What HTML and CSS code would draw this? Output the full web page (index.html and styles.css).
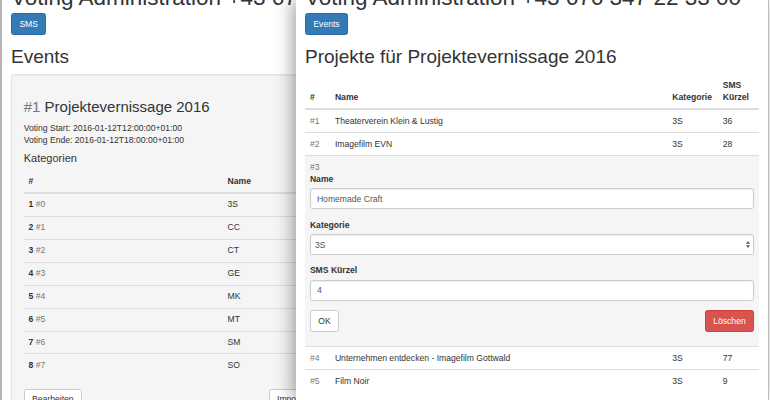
FILE: index.html
```html
<!DOCTYPE html>
<html lang="de">
<head>
<meta charset="utf-8">
<title>Voting Administration</title>
<link rel="stylesheet" href="styles.css">
</head>
<body>
<div class="stage">
  <div class="page page-back">
    <h1 class="title">Voting Administration +43 676 347 22 33 00</h1>
    <div class="toolbar"><button class="btn btn-primary">SMS</button></div>
    <h2>Events</h2>
    <div class="well">
      <h3><span class="muted">#1</span> Projektevernissage 2016</h3>
      <p class="dates">Voting Start: 2016-01-12T12:00:00+01:00<br>Voting Ende: 2016-01-12T18:00:00+01:00</p>
      <h4>Kategorien</h4>
      <table class="table cats">
        <thead>
          <tr><th class="c-id">#</th><th class="c-name">Name</th><th></th></tr>
        </thead>
        <tbody>
          <tr><td><b>1</b> <span class="muted">#0</span></td><td>3S</td><td></td></tr>
          <tr><td><b>2</b> <span class="muted">#1</span></td><td>CC</td><td></td></tr>
          <tr><td><b>3</b> <span class="muted">#2</span></td><td>CT</td><td></td></tr>
          <tr><td><b>4</b> <span class="muted">#3</span></td><td>GE</td><td></td></tr>
          <tr><td><b>5</b> <span class="muted">#4</span></td><td>MK</td><td></td></tr>
          <tr><td><b>6</b> <span class="muted">#5</span></td><td>MT</td><td></td></tr>
          <tr><td><b>7</b> <span class="muted">#6</span></td><td>SM</td><td></td></tr>
          <tr><td><b>8</b> <span class="muted">#7</span></td><td>SO</td><td></td></tr>
        </tbody>
      </table>
      <div class="well-actions">
        <button class="btn">Bearbeiten</button>
        <button class="btn">Importieren</button>
      </div>
    </div>
  </div>

  <div class="page page-front">
    <h1 class="title">Voting Administration +43 676 347 22 33 00</h1>
    <div class="toolbar"><button class="btn btn-primary">Events</button></div>
    <h2>Projekte für Projektevernissage 2016</h2>
    <table class="table projects">
      <thead>
        <tr>
          <th class="p-id">#</th>
          <th class="p-name">Name</th>
          <th class="p-kat">Kategorie</th>
          <th class="p-sms">SMS Kürzel</th>
        </tr>
      </thead>
      <tbody>
        <tr><td class="muted">#1</td><td>Theaterverein Klein &amp; Lustig</td><td>3S</td><td>36</td></tr>
        <tr><td class="muted">#2</td><td>Imagefilm EVN</td><td>3S</td><td>28</td></tr>
        <tr class="edit">
          <td colspan="4">
            <div class="muted">#3</div>
            <div class="form-group">
              <label for="f-name">Name</label>
              <input id="f-name" class="form-control" type="text" value="Homemade Craft">
            </div>
            <div class="form-group">
              <label for="f-kat">Kategorie</label>
              <div class="select-wrap">
                <select id="f-kat" class="form-control select">
                  <option>3S</option>
                  <option>CC</option>
                  <option>CT</option>
                </select>
                <svg class="select-arrows" width="4" height="7" viewBox="0 0 4 7" aria-hidden="true"><path d="M2 0L4 2.8H0Z M2 7L0 4.2H4Z" fill="#555"/></svg>
              </div>
            </div>
            <div class="form-group">
              <label for="f-sms">SMS Kürzel</label>
              <input id="f-sms" class="form-control" type="text" value="4">
            </div>
            <div class="form-actions">
              <button class="btn">OK</button>
              <button class="btn btn-danger">Löschen</button>
            </div>
          </td>
        </tr>
        <tr><td class="muted">#4</td><td>Unternehmen entdecken - Imagefilm Gottwald</td><td>3S</td><td>77</td></tr>
        <tr><td class="muted">#5</td><td>Film Noir</td><td>3S</td><td>9</td></tr>
      </tbody>
    </table>
  </div>
</div>
</body>
</html>
```

FILE: styles.css
```css
* { box-sizing: border-box; }

html, body {
  margin: 0;
  padding: 0;
}

body {
  font-family: "Liberation Sans", Arial, sans-serif;
  font-size: 8.6px;
  line-height: 12.2px;
  color: #333;
  background: #fff;
}

.stage {
  position: relative;
  width: 770px;
  height: 400px;
  overflow: hidden;
}

.page {
  display: flow-root;
  height: 400px;
  background: #fff;
  padding: 0 9px;
}

.page-back {
  width: 770px;
  border-left: 2px solid #b5b5b5;
}

.page-front {
  position: absolute;
  top: 0;
  left: 296px;
  width: 473px;
  border-right: 1px solid #bdbdbd;
  box-shadow: -4px 0 16px rgba(0, 0, 0, 0.35);
}

.title {
  font-size: 22.5px;
  line-height: 24.75px;
  font-weight: normal;
  margin: -14.2px 0 2.5px;
  white-space: nowrap;
}

.toolbar {
  display: flex;
}

.btn {
  display: inline-block;
  font-family: inherit;
  font-size: 8.6px;
  line-height: 12.2px;
  padding: 3.7px 7.4px;
  border: 1px solid #ccc;
  border-radius: 2.5px;
  background: #fff;
  color: #333;
  white-space: nowrap;
}

.btn-primary {
  background: #337ab7;
  border-color: #2e6da4;
  color: #fff;
}

.btn-danger {
  background: #d9534f;
  border-color: #d43f3a;
  color: #fff;
}

h2 {
  font-size: 19px;
  line-height: 20.9px;
  font-weight: normal;
  margin: 12.3px 0 6.1px;
  white-space: nowrap;
}

h3 {
  font-size: 15px;
  line-height: 16.5px;
  font-weight: normal;
  margin: 12.3px 0 6.1px;
}

h4 {
  font-size: 11px;
  line-height: 12.1px;
  font-weight: normal;
  margin: 6.1px 0 5.5px;
}

.muted { color: #777; }

.well {
  margin-top: 6.1px;
  background: #f5f5f5;
  border: 1px solid #e3e3e3;
  border-radius: 2.5px;
  padding: 11.7px;
  box-shadow: inset 0 1px 1px rgba(0, 0, 0, 0.05);
}

.dates {
  margin: 0 0 6.1px;
}

.table {
  width: 100%;
  border-collapse: collapse;
  table-layout: fixed;
  margin-bottom: 12.3px;
}

.table th,
.table td {
  padding: 4.9px;
  text-align: left;
  vertical-align: top;
  border-top: 1px solid #ddd;
  line-height: 12.2px;
}

.table thead th {
  vertical-align: bottom;
  border-top: 0;
  border-bottom: 2px solid #ddd;
  font-weight: bold;
}

.table tbody tr:first-child td {
  border-top: 0;
}

.cats .c-id { width: 199px; }
.cats .c-name { width: 120px; }

.well-actions {
  display: flex;
  gap: 186.6px;
}

.projects .p-id { width: 25px; }
.projects .p-kat { width: 50.4px; }
.projects .p-sms { width: 41.2px; }

.projects tr.edit td {
  background: #f5f5f5;
}

.form-group {
  margin-bottom: 9.4px;
}

label {
  display: block;
  font-weight: bold;
  margin-bottom: 3.1px;
}

.form-control {
  display: block;
  width: 100%;
  height: 20.9px;
  padding: 3.7px 6px;
  font-family: inherit;
  font-size: 8.6px;
  line-height: 12.2px;
  color: #555;
  background: #fff;
  border: 1px solid #ccc;
  border-radius: 2.5px;
  box-shadow: inset 0 1px 1px rgba(0, 0, 0, 0.075);
}

.select-wrap {
  position: relative;
}

.select {
  -webkit-appearance: none;
  appearance: none;
  padding-left: 4px;
}

.select-arrows {
  position: absolute;
  right: 4.5px;
  top: 7px;
}

.form-actions {
  display: flex;
  justify-content: space-between;
  margin-bottom: 9.4px;
}
```
